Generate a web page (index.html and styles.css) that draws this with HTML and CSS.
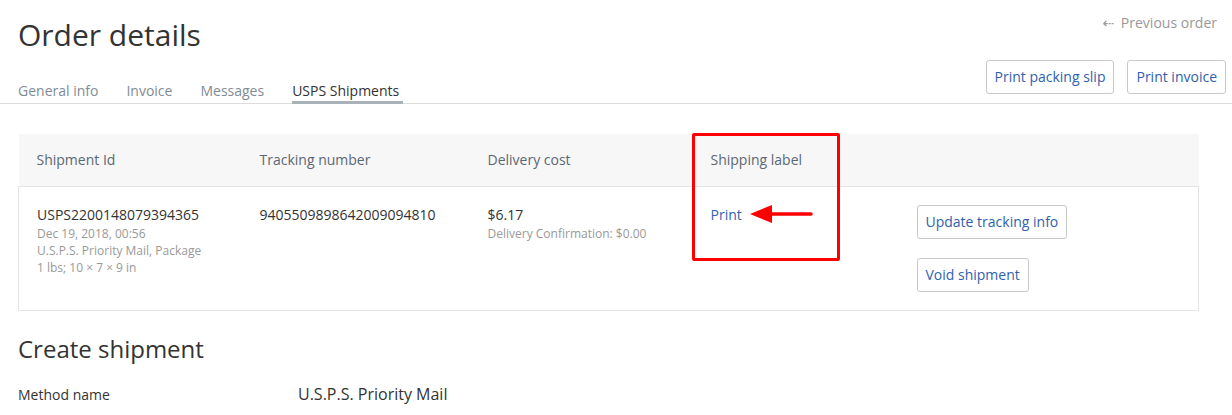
FILE: index.html
```html
<!DOCTYPE html>
<html lang="en">
<head>
<meta charset="utf-8">
<title>Order details</title>
<link rel="stylesheet" href="styles.css">
</head>
<body>
<header class="page-head">
  <div class="title-row">
    <h1 class="title">Order details</h1>
    <a class="prev-link" href="#"><span class="prev-arrow">⇠</span> Previous order</a>
  </div>
  <div class="tabbar">
    <nav class="tabs">
      <a class="tab" href="#">General info</a>
      <a class="tab" href="#">Invoice</a>
      <a class="tab" href="#">Messages</a>
      <a class="tab tab-active" href="#">USPS Shipments</a>
    </nav>
    <div class="head-actions">
      <button class="btn">Print packing slip</button>
      <button class="btn">Print invoice</button>
    </div>
  </div>
</header>

<main class="content">
  <div class="table-wrap">
    <table class="ship-table">
      <colgroup>
        <col class="c1"><col class="c2"><col class="c3"><col class="c4"><col class="c5">
      </colgroup>
      <thead>
        <tr>
          <th>Shipment Id</th>
          <th>Tracking number</th>
          <th>Delivery cost</th>
          <th>Shipping label</th>
          <th></th>
        </tr>
      </thead>
      <tbody>
        <tr>
          <td>
            <div class="main-line">USPS2200148079394365</div>
            <div class="sub-line">Dec 19, 2018, 00:56</div>
            <div class="sub-line">U.S.P.S. Priority Mail, Package</div>
            <div class="sub-line">1 lbs; 10 × 7 × 9 in</div>
          </td>
          <td><div class="main-line">9405509898642009094810</div></td>
          <td>
            <div class="main-line">$6.17</div>
            <div class="sub-line">Delivery Confirmation: $0.00</div>
          </td>
          <td><div class="main-line"><a class="link" href="#">Print</a></div></td>
          <td class="action-cell">
            <div class="row-actions">
              <button class="btn">Update tracking info</button>
              <button class="btn">Void shipment</button>
            </div>
          </td>
        </tr>
      </tbody>
    </table>
    <div class="highlight">
      <svg class="arrow" width="148" height="128" viewBox="0 0 148 128" aria-hidden="true">
        <polygon points="58,81 80,72 80,90" fill="#f00"/>
        <line x1="76" y1="81" x2="119" y2="81" stroke="#f00" stroke-width="3.5" stroke-linecap="round"/>
      </svg>
    </div>
  </div>

  <h2 class="section-title">Create shipment</h2>
  <div class="field-row">
    <div class="field-label">Method name</div>
    <div class="field-value">U.S.P.S. Priority Mail</div>
  </div>
</main>
</body>
</html>
```

FILE: styles.css
```css
* { box-sizing: border-box; }

html, body {
  margin: 0;
  padding: 0;
  background: #fff;
}

body {
  font-family: "Open Sans", "Liberation Sans", sans-serif;
  font-size: 14px;
  line-height: 20px;
  color: #333;
  width: 1232px;
  height: 415px;
  overflow: hidden;
}

a { text-decoration: none; }

.title-row {
  height: 60px;
  display: flex;
  justify-content: space-between;
  align-items: flex-start;
  padding: 15px 15px 0 18px;
}

.title {
  margin: 0;
  font-size: 30px;
  line-height: 40px;
  font-weight: 400;
  color: #333;
}

.prev-link {
  margin-top: -2px;
  color: #999;
  font-size: 14px;
  line-height: 20px;
}

.prev-arrow {
  font-family: "DejaVu Sans", sans-serif;
  font-size: 14px;
  margin-right: 3px;
}

.tabbar {
  display: flex;
  justify-content: space-between;
  align-items: flex-end;
  border-bottom: 1px solid #dcdcdc;
  padding: 0 6px 0 18px;
}

.tabs {
  display: flex;
  gap: 28px;
}

.tab {
  display: block;
  color: #7f8c96;
  line-height: 20px;
  border-bottom: 3px solid transparent;
  margin-bottom: -1px;
}

.tab-active {
  color: #333;
  border-bottom-color: #a8b2b7;
  padding-right: 4px;
}

.head-actions {
  display: flex;
  gap: 13px;
  padding-bottom: 9px;
}

.btn {
  font-family: "Open Sans", "Liberation Sans", sans-serif;
  font-size: 14px;
  line-height: 20px;
  height: 34px;
  padding: 0 8px;
  background: #fff;
  border: 1px solid #c9c9c9;
  border-radius: 3px;
  color: #2f5fae;
  cursor: pointer;
}

.content {
  padding: 30px 34px 0 18px;
}

.table-wrap {
  position: relative;
}

.ship-table {
  width: 1180px;
  border-collapse: collapse;
  table-layout: fixed;
}

.c1 { width: 223px; }
.c2 { width: 228px; }
.c3 { width: 223px; }
.c4 { width: 206px; }
.c5 { width: 300px; }

.ship-table th {
  height: 52px;
  background: #f7f7f7;
  text-align: left;
  font-weight: 400;
  color: #5b6775;
  padding: 0 0 0 18px;
  vertical-align: middle;
}

.ship-table tbody tr {
  border: 1px solid #e4e4e4;
}

.ship-table td {
  vertical-align: top;
  padding: 18px 0 0 18px;
}

.ship-table td.action-cell {
  padding: 18px 0 18px 18px;
}

.main-line {
  color: #333;
  line-height: 20px;
}

.sub-line {
  font-size: 12px;
  line-height: 17px;
  color: #999;
}

.link {
  color: #2f63b5;
}

.row-actions {
  display: flex;
  flex-direction: column;
  align-items: flex-start;
  gap: 19px;
}

.highlight {
  position: absolute;
  left: 674px;
  top: -1px;
  width: 148px;
  height: 128px;
  border: 3px solid #f00;
  border-radius: 2px;
}

.arrow {
  position: absolute;
  left: -3px;
  top: -3px;
}

.section-title {
  margin: 22px 0 0 0;
  font-size: 24px;
  line-height: 32px;
  font-weight: 400;
  color: #333;
}

.field-row {
  display: grid;
  grid-template-columns: 280px auto;
  margin-top: 19px;
  align-items: baseline;
}

.field-label {
  font-size: 14px;
  color: #333;
}

.field-value {
  font-size: 16px;
  color: #333;
}
```
